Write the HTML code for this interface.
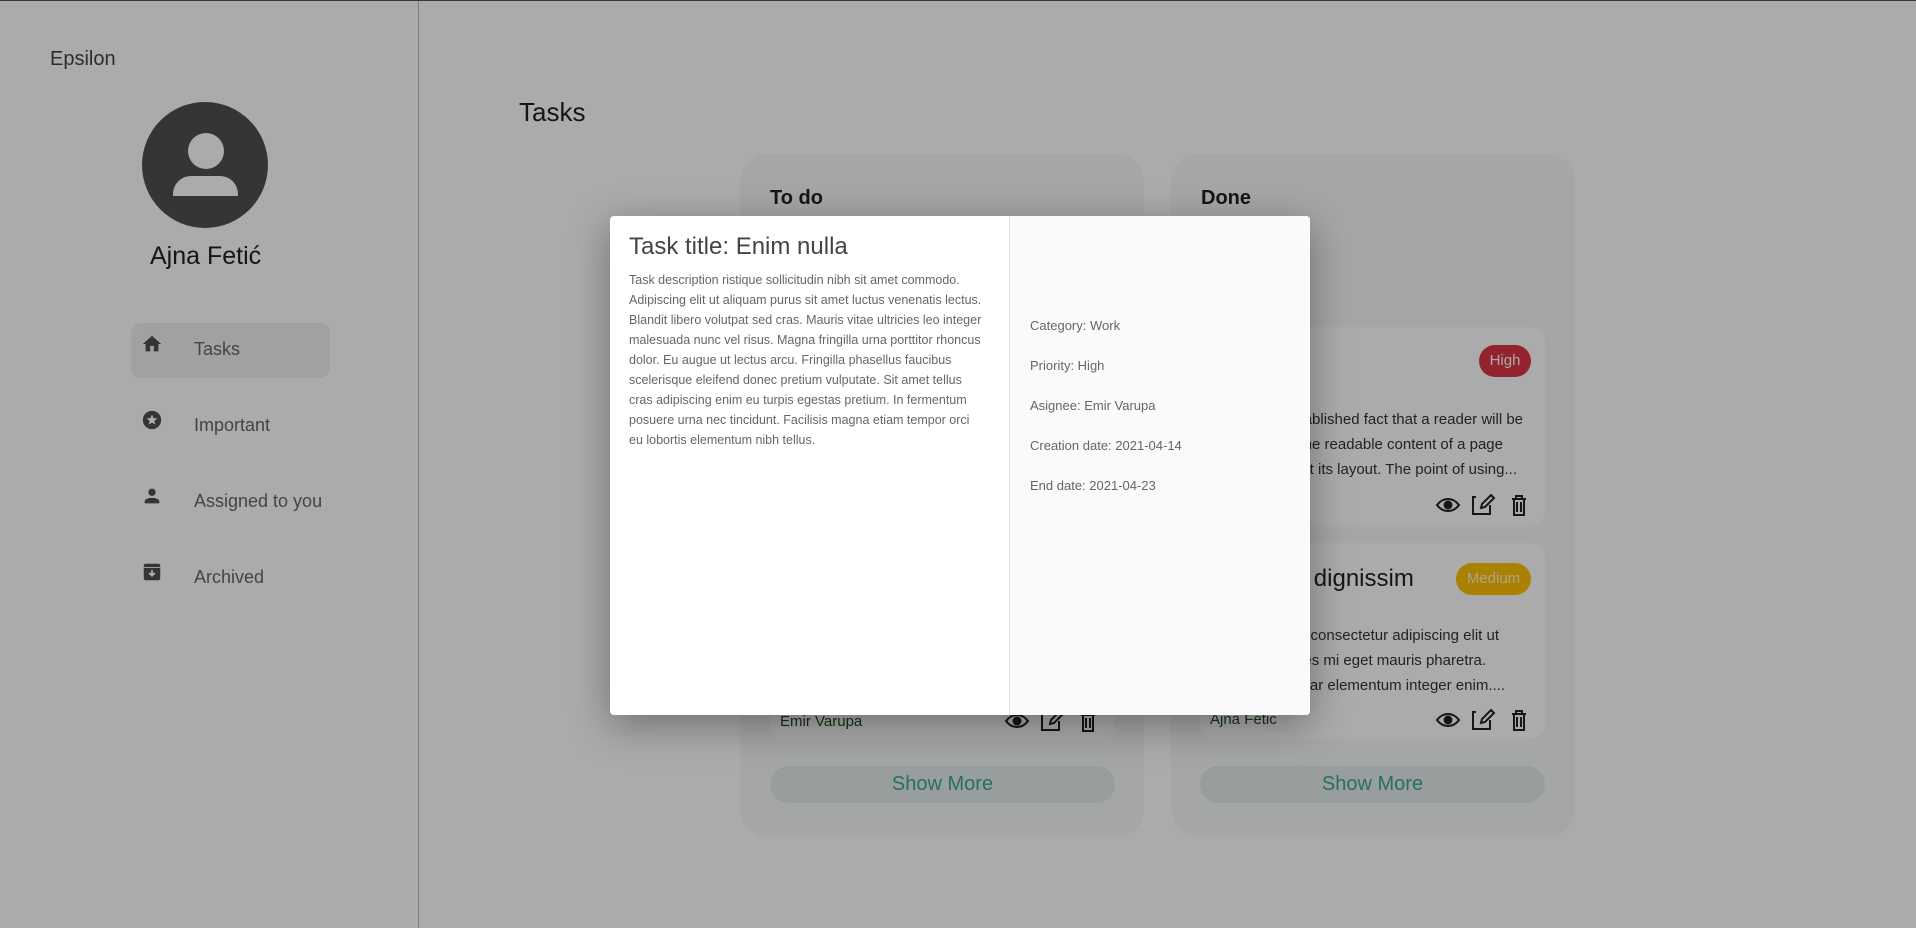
<!DOCTYPE html>
<html><head><meta charset="utf-8"><style>
*{margin:0;padding:0;box-sizing:border-box}
html,body{width:1916px;height:928px;overflow:hidden;background:#fff;font-family:"Liberation Sans",sans-serif;color:#222}
.a{position:absolute}
.top{left:0;top:0;width:1916px;height:1px;background:#555}
.side{left:0;top:1px;width:419px;height:927px;border-right:1px solid #bbb}
.nav{left:131px;width:199px;height:55px;border-radius:10px;font-size:18px;color:#666}
.nav span{position:absolute;left:63px;top:16px}
.nav svg{position:absolute;left:10px;top:10px}
.col{width:404px;height:683px;top:154px;background:#f7f8fa;border-radius:28px}
.col h3{position:absolute;left:30px;top:33px;font-size:20px;font-weight:bold;color:#222}
.card{background:#fff;border-radius:14px;width:345px}
.ln{position:absolute;left:-200px;font-size:15px;line-height:25px;color:#333;white-space:nowrap;text-align:right}
.badge{border-radius:16px;height:32px;font-size:15px;line-height:32px;text-align:center;color:#fff}
.sm{height:37px;width:345px;border-radius:19px;background:#e3ecea;color:#3aa88a;font-size:20px;text-align:center;line-height:37px}
.ov{left:0;top:0;width:1916px;height:928px;background:rgba(0,0,0,0.33)}
.modal{left:610px;top:216px;width:700px;height:499px;background:#fff;border-radius:4px;box-shadow:0 10px 40px rgba(0,0,0,.35);overflow:hidden}
.rp{left:399px;top:0;width:301px;height:499px;background:#fafafa;border-left:1px solid #ddd}
.rp div{position:absolute;left:20px;font-size:13px;color:#666}
</style></head><body>
<div class="a top"></div>
<div class="a side"></div>
<div class="a" style="left:50px;top:48px;font-size:20px;color:#444">Epsilon</div>
<div class="a" style="left:142px;top:102px;width:126px;height:126px;border-radius:50%;background:#4f4f4f"></div>
<div class="a" style="left:188px;top:133px;width:36px;height:36px;border-radius:50%;background:#fff"></div>
<div class="a" style="left:173px;top:176px;width:65px;height:20px;border-radius:18px 18px 0 0;background:#fff"></div>
<div class="a" style="left:150px;top:242px;font-size:25px;color:#222">Ajna Fetić</div>
<div class="a nav" style="top:323px;background:#f1f1f1"><svg width="22" height="22" viewBox="0 0 24 24"><path d="M10 20v-6h4v6h5v-8h3L12 3 2 12h3v8z" fill="#4f4f4f"/></svg><span>Tasks</span></div>
<div class="a nav" style="top:399px"><svg width="22" height="22" viewBox="0 0 24 24"><circle cx="12" cy="12" r="10" fill="#4f4f4f"/><path d="M12 6l1.7 3.8 4 .4-3 2.7.9 4L12 14.8 8.4 16.9l.9-4-3-2.7 4-.4z" fill="#fff"/></svg><span>Important</span></div>
<div class="a nav" style="top:475px"><svg width="22" height="22" viewBox="0 0 24 24"><circle cx="12" cy="8" r="4" fill="#4f4f4f"/><path d="M4 20v-2c0-3 5-4 8-4s8 1 8 4v2z" fill="#4f4f4f"/></svg><span>Assigned to you</span></div>
<div class="a nav" style="top:551px"><svg width="22" height="22" viewBox="0 0 24 24"><rect x="3" y="3" width="18" height="18" rx="2" fill="#4f4f4f"/><path d="M3 7h18" stroke="#fff"/><path d="M12 10v6M9 13l3 3 3-3" stroke="#fff" stroke-width="2" fill="none"/></svg><span>Archived</span></div>
<div class="a" style="left:519px;top:97px;font-size:26px;color:#222">Tasks</div>

<div class="a col" style="left:740px"><h3>To do</h3>
 <div class="a card" style="left:30px;top:400px;height:185px"></div>
 <div class="a" style="left:40px;top:559px;font-size:15px;color:#1f4d1f">Emir Varupa</div>
 <div class="a sm" style="left:30px;top:612px">Show More</div>
</div>
<div class="a col" style="left:1171px"><h3>Done</h3>
 <div class="a card" style="left:29px;top:173px;height:198px">
  <div class="a badge" style="right:14px;top:18px;width:52px;background:#dc3545">High</div>
  <div class="ln" style="top:80px;width:523px">It is a long established fact that a reader will be</div>
  <div class="ln" style="top:105px;width:503px">distracted by the readable content of a page</div>
  <div class="ln" style="top:130px;width:517px">when looking at its layout. The point of using...</div>
 </div>
 <div class="a card" style="left:29px;top:389px;height:196px">
  <div class="a" style="left:16px;top:22px;font-size:24px">Tristique dignissim</div>
  <div class="a badge" style="right:14px;top:20px;width:75px;background:#ffc107;color:#fff5d0">Medium</div>
  <div class="ln" style="top:80px;width:499px">Lorem ipsum dolor sit amet consectetur adipiscing elit ut</div>
  <div class="ln" style="top:105px;width:486px">Aliquam purus ultricies mi eget mauris pharetra.</div>
  <div class="ln" style="top:130px;width:505px">Cras pulvinar elementum integer enim....</div>
  <div class="a" style="left:10px;top:168px;font-size:15px;color:#1f4d1f">Ajna Fetic</div>
 </div>
 <div class="a sm" style="left:29px;top:612px">Show More</div>
</div>
<svg class="a" style="left:0;top:0" width="1916" height="928">
<g fill="none" stroke="#222" stroke-width="2">
 <path d="M1437 505c6-8 16-8 22 0c-6 8-16 8-22 0z"/><circle cx="1448" cy="505" r="3.5" fill="#222"/>
 <path d="M1476 497h-3v17h17v-9M1481 508l1-4 9-9 3 3-9 9z"/>
 <path d="M1512 499h14M1516 499v-3h6v3M1514 499v16h10v-16M1517 502v10M1521 502v10"/>
</g>
<g fill="none" stroke="#222" stroke-width="2" transform="translate(0,215)">
 <path d="M1437 505c6-8 16-8 22 0c-6 8-16 8-22 0z"/><circle cx="1448" cy="505" r="3.5" fill="#222"/>
 <path d="M1476 497h-3v17h17v-9M1481 508l1-4 9-9 3 3-9 9z"/>
 <path d="M1512 499h14M1516 499v-3h6v3M1514 499v16h10v-16M1517 502v10M1521 502v10"/>
</g>
<g fill="none" stroke="#222" stroke-width="2" transform="translate(-431,216)">
 <path d="M1437 505c6-8 16-8 22 0c-6 8-16 8-22 0z"/><circle cx="1448" cy="505" r="3.5" fill="#222"/>
 <path d="M1476 497h-3v17h17v-9M1481 508l1-4 9-9 3 3-9 9z"/>
 <path d="M1512 499h14M1516 499v-3h6v3M1514 499v16h10v-16M1517 502v10M1521 502v10"/>
</g>
</svg>

<div class="a ov"></div>
<div class="a modal">
 <div class="a" style="left:19px;top:17px;font-size:24px;color:#444">Task title: Enim nulla</div>
 <div class="a" style="left:19px;top:54px;width:355px;font-size:12.5px;line-height:20px;color:#666">Task description ristique sollicitudin nibh sit amet commodo. Adipiscing elit ut aliquam purus sit amet luctus venenatis lectus. Blandit libero volutpat sed cras. Mauris vitae ultricies leo integer malesuada nunc vel risus. Magna fringilla urna porttitor rhoncus dolor. Eu augue ut lectus arcu. Fringilla phasellus faucibus scelerisque eleifend donec pretium vulputate. Sit amet tellus cras adipiscing enim eu turpis egestas pretium. In fermentum posuere urna nec tincidunt. Facilisis magna etiam tempor orci eu lobortis elementum nibh tellus.</div>
 <div class="a rp">
  <div style="top:102px">Category: Work</div>
  <div style="top:142px">Priority: High</div>
  <div style="top:182px">Asignee: Emir Varupa</div>
  <div style="top:222px">Creation date: 2021-04-14</div>
  <div style="top:262px">End date: 2021-04-23</div>
 </div>
</div>
</body></html>
